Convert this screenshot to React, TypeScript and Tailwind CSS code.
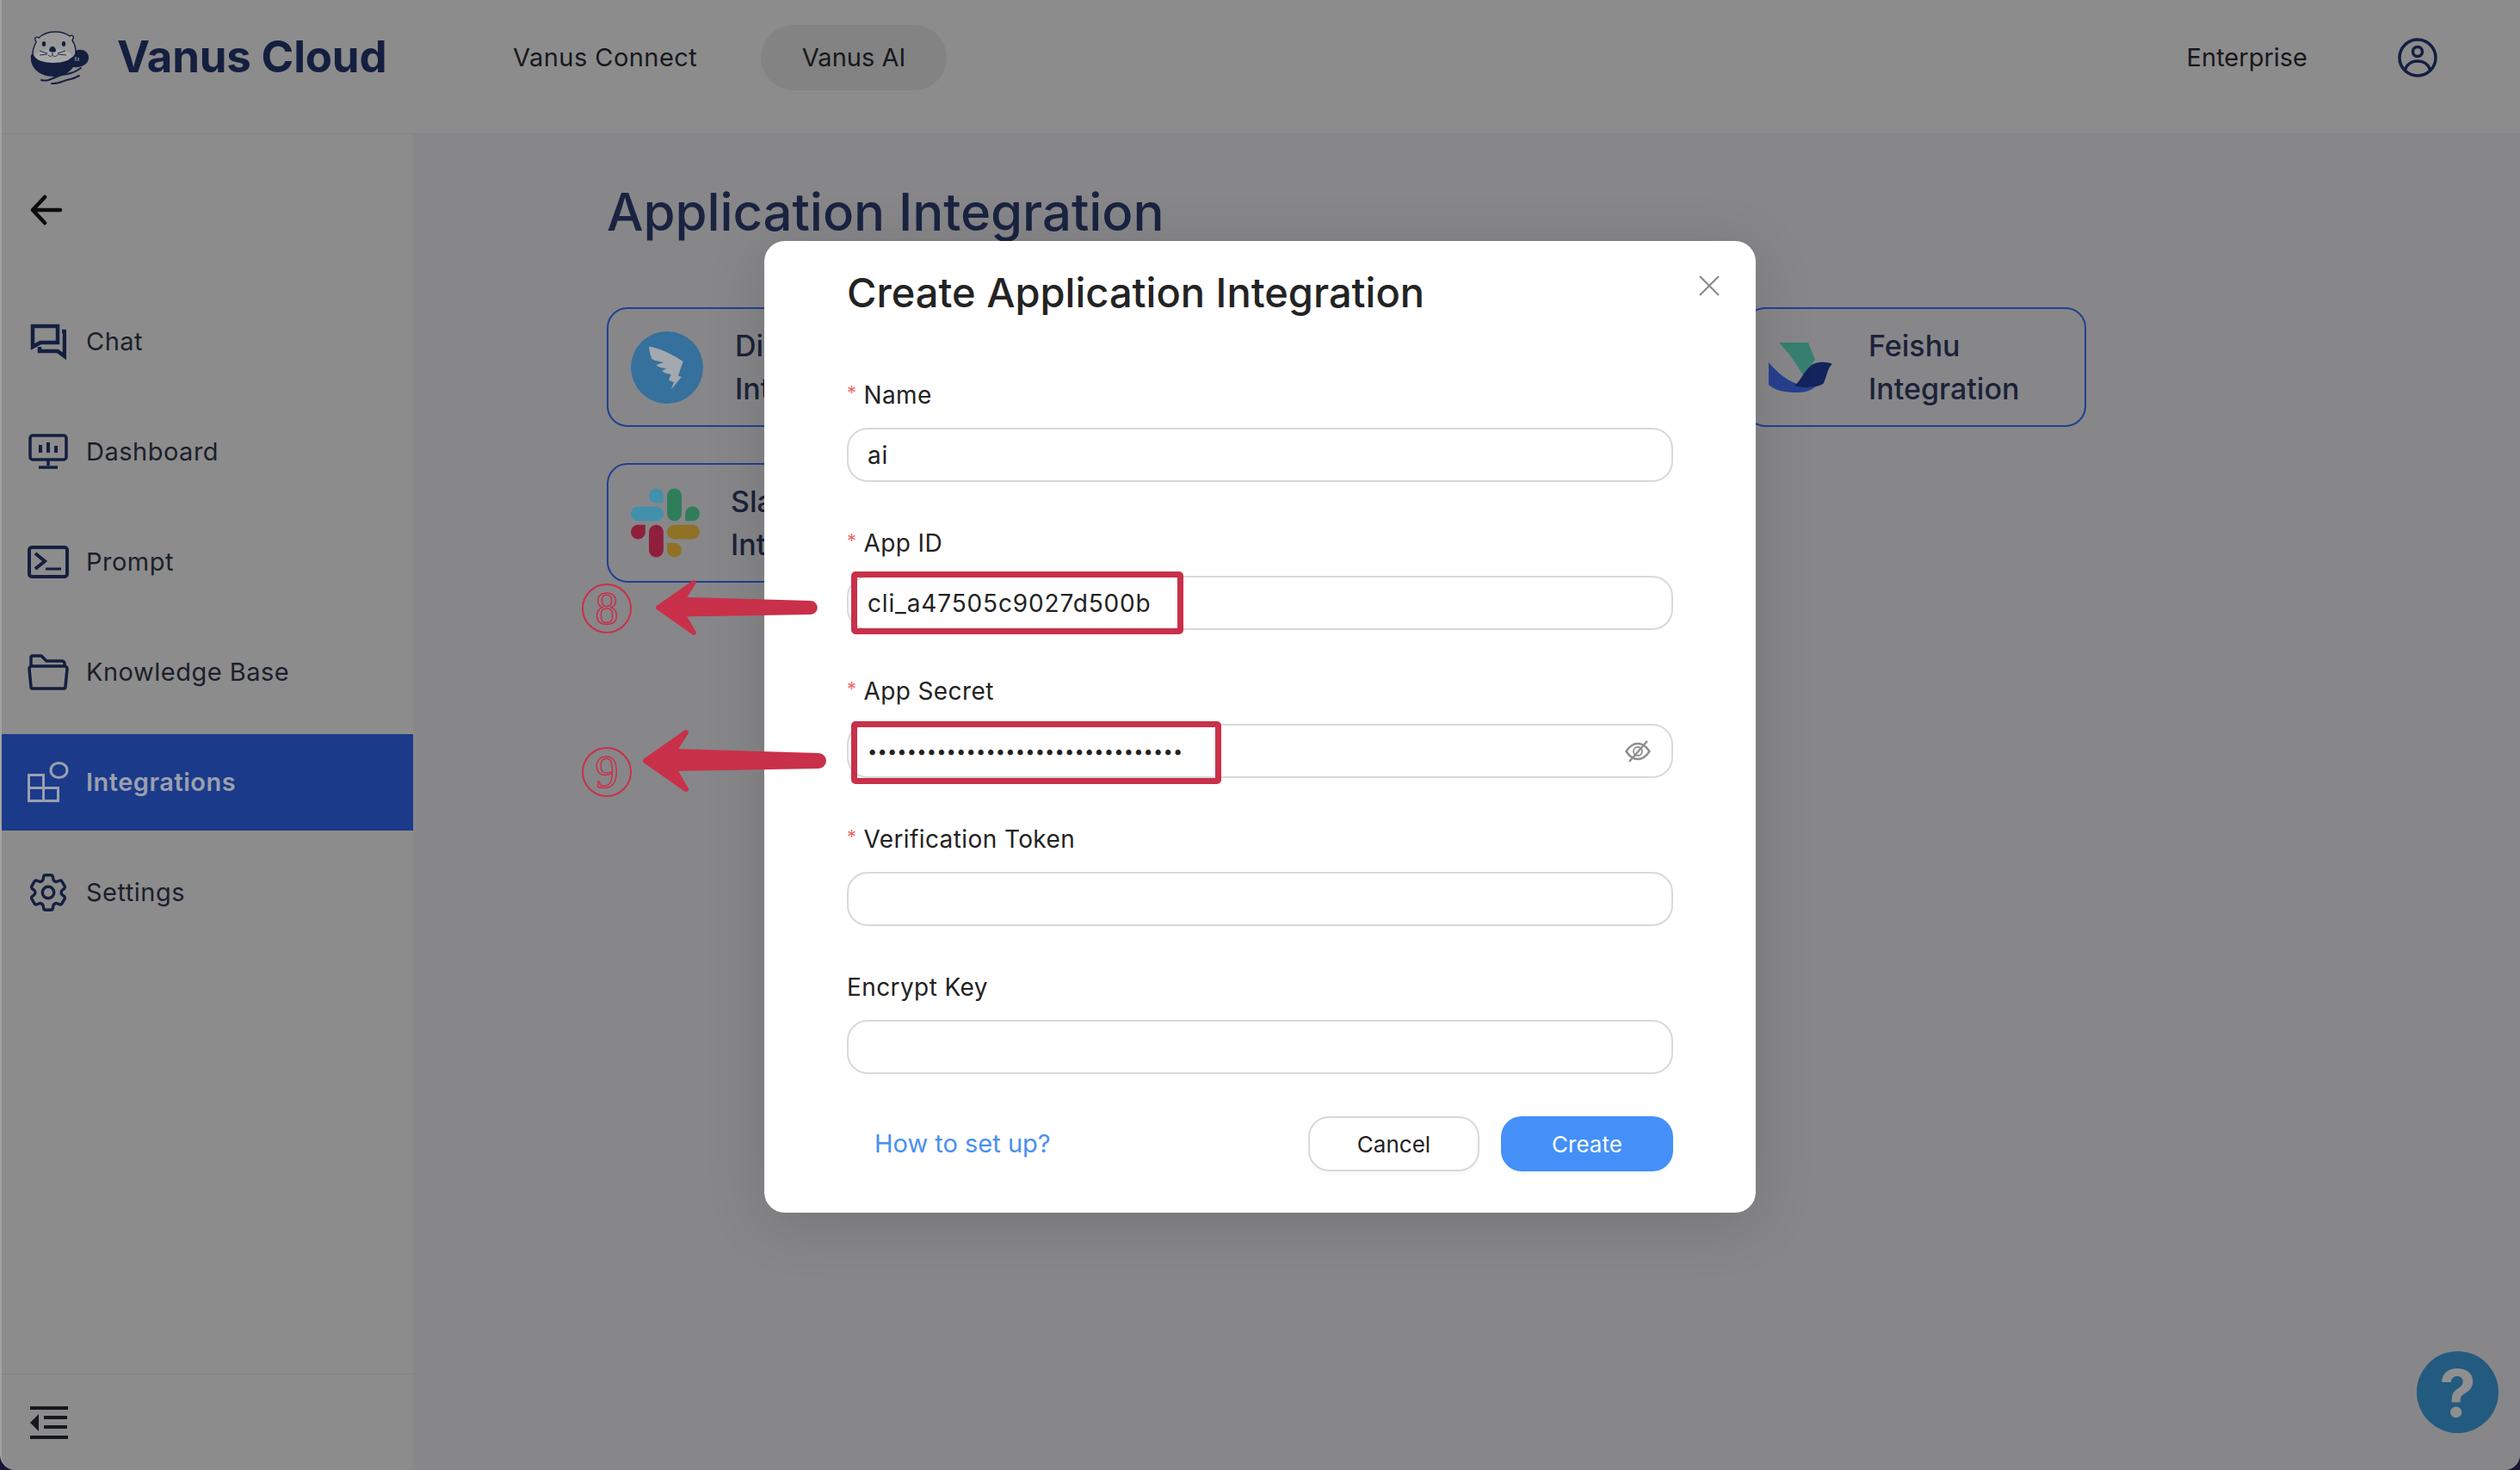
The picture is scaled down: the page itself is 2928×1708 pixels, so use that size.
import React from "react";
import { HiOutlineCog6Tooth } from "react-icons/hi2";

const navy = "#141f40";

const ChatIcon = () => (
  <svg width="42" height="42" viewBox="0 0 42 42" fill="none" stroke={navy} strokeWidth="4.5">
    <path d="M3 3h29v19H12l-9 5z" strokeLinejoin="miter" />
    <path d="M37 9h3v29l-8-6H11v-5" strokeLinejoin="miter" fill="none" />
  </svg>
);

const DashboardIcon = () => (
  <svg width="46" height="42" viewBox="0 0 46 42" fill="none" stroke={navy} strokeWidth="3.5">
    <rect x="2" y="2" width="42" height="28" rx="3" />
    <path d="M23 30v7M12 39h22" />
    <path d="M14 13v9M23 10v12M32 14v8" strokeWidth="4" />
  </svg>
);

const PromptIcon = () => (
  <svg width="48" height="38" viewBox="0 0 48 38" fill="none" stroke={navy} strokeWidth="4">
    <rect x="2" y="2" width="44" height="34" rx="3" />
    <path d="M9 9l11 9-11 9" />
    <path d="M21 27h18" strokeWidth="3" />
  </svg>
);

const FolderIcon = () => (
  <svg width="48" height="42" viewBox="0 0 48 42" fill="none" stroke={navy} strokeWidth="3.5" strokeLinejoin="round">
    <path d="M4 14V4a2 2 0 0 1 2-2h10l6 6h18a3 3 0 0 1 3 3v3" />
    <path d="M2 17a3 3 0 0 1 3-3h38a3 3 0 0 1 3 3l-2 21a2 2 0 0 1-2 2H6a2 2 0 0 1-2-2z" />
  </svg>
);

const IntegrationsIcon = () => (
  <svg width="48" height="48" viewBox="0 0 48 48" fill="none" stroke="#9aa0ae" strokeWidth="3">
    <rect x="1.5" y="15.5" width="17" height="15" />
    <rect x="1.5" y="30.5" width="17" height="15" />
    <rect x="18.5" y="30.5" width="17" height="15" />
    <ellipse cx="36.5" cy="10" rx="9.5" ry="8.5" />
  </svg>
);

const nav = [
  { label: "Chat", icon: <ChatIcon /> },
  { label: "Dashboard", icon: <DashboardIcon /> },
  { label: "Prompt", icon: <PromptIcon /> },
  { label: "Knowledge Base", icon: <FolderIcon /> },
  { label: "Integrations", icon: <IntegrationsIcon />, active: true },
  { label: "Settings", icon: <HiOutlineCog6Tooth size={54} color={navy} /> },
];

const OtterLogo = () => (
  <svg width="70" height="66" viewBox="14 12 70 66" fill="none" className="shrink-0">
    {/* body and flipper */}
    <path d="M16 42c-2 14 9 25 27 25 10 0 17-4 22-11 9 1 18-3 18-11 0-8-9-11-15-8-6-5-40-8-52 5z" fill={navy} />
    {/* head */}
    <path d="M22 27c-1-2-2-4-1-5 1-1 3-1 4 0 9-9 27-9 36-2 1-1 3-1 4 0 1 1 0 3-1 5 3 4 4 9 4 14 0 7-12 11-26 11S18 47 18 40c0-5 2-9 4-13z" fill="#999999" stroke={navy} strokeWidth="1.4" />
    <ellipse cx="42" cy="43" rx="21" ry="8" fill="#a8a8a8" />
    <ellipse cx="31" cy="29" rx="2.2" ry="3" fill={navy} />
    <ellipse cx="54" cy="29" rx="2.2" ry="3" fill={navy} />
    <path d="M37 37c0-3 2-5 4-5s4 2 4 5c0 2-6 2-8 0z" fill={navy} />
    <path d="M41 39v3M36 42c2 2 4 2 5 0 1 2 4 2 6 0M26 37l9 3M26 42l9-1M56 37l-9 3M57 42l-10-1" stroke={navy} strokeWidth="0.9" />
    <path d="M68 44v5M71 45v4" stroke="#999999" strokeWidth="1.2" />
    {/* waves */}
    <path d="M28 71c10 3 16-6 30-7 6-1 12-4 16-7M40 75c8 1 14-4 22-5 4-1 6-2 10-4" stroke={navy} strokeWidth="2" strokeLinecap="round" />
  </svg>
);

const DingTalkLogo = () => (
  <svg width="84" height="84" viewBox="0 0 84 84" className="shrink-0">
    <circle cx="42" cy="42" r="42" fill="#36709c" />
    <path d="M21.7 17.7C30 19 45 24 60.7 35L55 51.7l4 1-12.3 15 3.3-8.7-6-2.3 2.7-6.7c-4.700-1-8.700-2-10.700-4l5.300-3c-4 0-9-1-12-4l9-3c-6-1-11-2-14-4.300-2-4.700-3-9.700-3.300-14z" fill="#a3a9ae" />
  </svg>
);

const SlackLogo = () => (
  <svg width="80" height="81" viewBox="0 0 122.8 122.8" className="shrink-0">
    <path d="M25.8 77.6c0 7.1-5.8 12.9-12.9 12.9S0 84.7 0 77.6s5.8-12.9 12.9-12.9h12.9v12.9z" fill="#8f1f3d" />
    <path d="M32.3 77.6c0-7.1 5.8-12.9 12.9-12.9s12.9 5.8 12.9 12.9v32.3c0 7.1-5.8 12.9-12.9 12.9s-12.9-5.8-12.9-12.9V77.6z" fill="#8f1f3d" />
    <path d="M45.2 25.8c-7.1 0-12.9-5.8-12.9-12.9S38.1 0 45.2 0s12.9 5.8 12.9 12.9v12.9H45.2z" fill="#4390ad" />
    <path d="M45.2 32.3c7.1 0 12.9 5.8 12.9 12.9s-5.8 12.9-12.9 12.9H12.9C5.8 58.1 0 52.3 0 45.2s5.8-12.9 12.9-12.9h32.3z" fill="#4390ad" />
    <path d="M97 45.2c0-7.1 5.8-12.9 12.9-12.9s12.9 5.8 12.9 12.9-5.8 12.9-12.9 12.9H97V45.2z" fill="#2f7d5a" />
    <path d="M90.5 45.2c0 7.1-5.8 12.9-12.9 12.9s-12.9-5.8-12.9-12.9V12.9C64.7 5.8 70.5 0 77.6 0s12.9 5.8 12.9 12.9v32.3z" fill="#2f7d5a" />
    <path d="M77.6 97c7.1 0 12.9 5.8 12.9 12.9s-5.8 12.9-12.9 12.9-12.9-5.8-12.9-12.9V97h12.9z" fill="#8f7226" />
    <path d="M77.6 90.5c-7.1 0-12.9-5.8-12.9-12.9s5.8-12.9 12.9-12.9h32.3c7.1 0 12.9 5.8 12.9 12.9s-5.8 12.9-12.9 12.9H77.6z" fill="#8f7226" />
  </svg>
);

const FeishuLogo = () => (
  <svg width="74" height="58" viewBox="0 0 74 58" className="shrink-0">
    <path d="M12 0h34l8 20-14 18C32 24 22 10 12 0z" fill="#37806f" />
    <path d="M0 23c10 12 22 22 36 26 9 2 18 0 22-1-6 7-15 10-24 10-14 0-27-2-34-9z" fill="#27408f" />
    <path d="M30 50c7-5 11-17 20-24 7-4 17-4 24-1-5 3-6 13-10 22-2 2-6 4-12 4-9 2-16 1-22-1z" fill="#13235c" />
  </svg>
);

const cardClass = "flex h-[139px] w-[397px] items-center rounded-[24px] border-2 border-[#21408f] pl-[26px]";

const Card = ({ logo, title, textClass, className = "" }: { logo: React.ReactNode; title: string; textClass: string; className?: string }) => (
  <div className={`${cardClass} ${className}`}>
    {logo}
    <div className={`text-[34px] leading-[50px] font-medium whitespace-nowrap text-[#1b2238] ${textClass}`}>
      {title}
      <br />
      Integration
    </div>
  </div>
);

const fields = [
  { label: "Name", required: true, value: "ai" },
  { label: "App ID", required: true, value: "cli_a47505c9027d500b" },
  { label: "App Secret", required: true, secret: "••••••••••••••••••••••••••••••••" },
  { label: "Verification Token", required: true, value: "" },
  { label: "Encrypt Key", required: false, value: "" },
];

const EyeOff = () => (
  <svg width="30" height="26" viewBox="0 0 30 26" fill="none" stroke="#8e8e8e" strokeWidth="2.4" className="shrink-0">
    <path d="M1.5 13C6 6 10 4 15 4s9 2 13.5 9C24 20 20 22 15 22S6 20 1.5 13z" />
    <circle cx="15" cy="13" r="5" strokeWidth="1.8" />
    <path d="M5 25L26 1" />
  </svg>
);

const Arrow = ({ className }: { className: string }) => (
  <svg width="220" height="72" viewBox="0 0 220 72" className={`absolute ${className}`} fill="#c9304a" stroke="#c9304a" strokeWidth="6" strokeLinejoin="round" strokeLinecap="round">
    <path d="M3 36L50 3 36 25 204 30a6 6 0 0 1 0 12L36 45 50 69z" />
  </svg>
);

const CircledNumber = ({ n, className }: { n: string; className: string }) => (
  <div className={`absolute flex h-[58px] w-[58px] items-center justify-center rounded-full border-2 border-[#c9304a] ${className}`}>
    <span className="font-['Liberation_Serif',serif] text-[54px] leading-none text-transparent [-webkit-text-stroke:1.5px_#c9304a]">{n}</span>
  </div>
);

export default function App() {
  return (
    <div className="h-[1708px] w-[2928px] overflow-hidden bg-[#1a1530] font-['Inter',sans-serif]">
      <div className="relative flex h-full w-full flex-col overflow-hidden rounded-b-[18px] border-l-2 border-[#a3a3a3] bg-[#8c8c8c]">
        {/* top bar */}
        <header className="flex h-[156px] shrink-0 items-center border-b border-[#858585] bg-[#8c8c8c] pr-[96px] pb-[22px] pl-[32px]">
          <OtterLogo />
          <span className="ml-[32px] w-[314px] text-[51px] font-bold tracking-[-0.2px] whitespace-nowrap text-[#141f40]">Vanus Cloud</span>
          <span className="ml-[146px] w-[216px] text-[29px] tracking-[0.45px] whitespace-nowrap text-[#17181c]">Vanus Connect</span>
          <span className="ml-[72px] flex h-[76px] w-[216px] items-center justify-center rounded-full bg-[#838383] text-[29px] text-[#17181c]">Vanus AI</span>
          <span className="ml-auto text-[29px] text-[#17181c]">Enterprise</span>
          <svg width="46" height="46" viewBox="0 0 46 46" fill="none" stroke={navy} strokeWidth="3.5" className="ml-[105px]">
            <circle cx="23" cy="23" r="21" />
            <circle cx="23" cy="16" r="5.5" />
            <path d="M8 38c2-7 8-11 15-11s13 4 15 11" />
          </svg>
        </header>

        <div className="flex min-h-0 flex-1">
          {/* sidebar */}
          <aside className="flex w-[478px] shrink-0 flex-col bg-[#8c8c8c]">
            <div className="pt-[70px] pl-[33px]">
              <svg width="38" height="36" viewBox="0 0 38 36" fill="none" stroke="#0c0c0e" strokeWidth="4.5" strokeLinecap="round" strokeLinejoin="round">
                <path d="M17 3L3 18l14 15M3 18h32" />
              </svg>
            </div>
            <nav className="mt-[79px] flex flex-col gap-[16px]">
              {nav.map((item) => (
                <div
                  key={item.label}
                  className={`flex h-[112px] items-center ${item.active ? "bg-[#1b3a8a]" : ""}`}
                >
                  <div className="flex w-[98px] shrink-0 justify-center pl-[10px]">{item.icon}</div>
                  <span
                    className={`text-[29px] tracking-[0.5px] ${item.active ? "font-semibold text-[#9aa0ae]" : "text-[#1b1f2b]"}`}
                  >
                    {item.label}
                  </span>
                </div>
              ))}
            </nav>
            <div className="mt-auto flex h-[112px] items-center border-t border-[#838383] pl-[32px]">
              <svg width="46" height="40" viewBox="0 0 46 40" fill="#17181c">
                <rect x="1" y="1" width="44" height="4" />
                <rect x="17" y="12" width="27" height="4" />
                <rect x="17" y="23" width="27" height="4" />
                <rect x="1" y="35" width="44" height="4" />
                <path d="M11 10v20L1 20z" />
              </svg>
            </div>
          </aside>

          {/* page */}
          <main className="flex-1 bg-[#87878a] pl-[225px]">
            <h1 className="mt-[52px] text-[60px] leading-[76px] font-medium tracking-[-0.1px] text-[#1a2340]">Application Integration</h1>
            <div className="mt-[73px] grid w-[1719px] grid-cols-[397px_397px_397px] gap-x-[264px] gap-y-[42px]">
              <Card logo={<DingTalkLogo />} title="DingTalk" textClass="ml-[37px] w-[60px] overflow-hidden" />
              <Card logo={<FeishuLogo />} title="Feishu" textClass="ml-[42px]" className="col-start-3" />
              <Card logo={<SlackLogo />} title="Slack" textClass="ml-[36px] w-[60px] overflow-hidden" />
            </div>
          </main>
        </div>

        {/* modal */}
        <div className="absolute top-[280px] left-[886px] h-[1129px] w-[1152px] rounded-[24px] bg-white px-[96px] pt-[28px] shadow-[0_12px_70px_rgba(0,0,0,0.14)]">
          <div className="relative">
            <h2 className="text-[47px] leading-[64px] font-medium text-[#232323]">Create Application Integration</h2>
            <svg width="24" height="24" viewBox="0 0 24 24" fill="none" stroke="#8b8b8b" strokeWidth="2.2" className="absolute top-[12px] right-[-54px]">
              <path d="M1 1l22 22M23 1L1 23" />
            </svg>
          </div>
          <div className="mt-[65px] flex flex-col gap-[49px]">
            {fields.map((f) => (
              <div key={f.label}>
                <label className="flex h-[44px] items-center text-[28px] tracking-[0.4px] text-[#222222]">
                  {f.required && <span className="mt-[-6px] mr-[8px] text-[22px] text-[#ef6a6a]">*</span>}
                  {f.label}
                </label>
                <div className="mt-[16px] flex h-[63px] items-center rounded-[24px] border-2 border-[#d9d9d9] bg-white pr-[24px] pl-[22px] text-[28px] tracking-[0.85px] text-[#222222]">
                  {f.secret ? (
                    <>
                      <span className="text-[20px] tracking-[0.2px]">{f.secret}</span>
                      <span className="ml-auto pl-[4px]">
                        <EyeOff />
                      </span>
                    </>
                  ) : (
                    f.value
                  )}
                </div>
              </div>
            ))}
          </div>
          <div className="mt-[49px] flex items-center">
            <span className="ml-[32px] text-[29px] text-[#4a90f0]">How to set up?</span>
            <button className="ml-auto h-[64px] w-[199px] rounded-[24px] border-2 border-[#d9d9d9] bg-white text-[26px] text-[#222222] shadow-[0_4px_0_rgba(0,0,0,0.02)]">
              Cancel
            </button>
            <button className="ml-[25px] h-[64px] w-[200px] rounded-[24px] bg-[#4490f8] text-[26px] text-white shadow-[0_4px_0_rgba(0,0,0,0.02)]">
              Create
            </button>
          </div>
        </div>

        {/* annotations drawn over the shot */}
        <div className="absolute top-[664px] left-[987px] h-[73px] w-[386px] rounded-[5px] border-[7px] border-[#c9304a]" />
        <div className="absolute top-[838px] left-[987px] h-[73px] w-[430px] rounded-[5px] border-[7px] border-[#c9304a]" />
        <Arrow className="top-[670px] left-[760px] !w-[194px]" />
        <Arrow className="top-[848px] left-[745px]" />
        <CircledNumber n="8" className="top-[678px] left-[674px]" />
        <CircledNumber n="9" className="top-[868px] left-[674px]" />

        {/* help button */}
        <div className="absolute top-[1570px] left-[2806px] flex h-[95px] w-[95px] items-center justify-center rounded-full bg-[#235a80] text-[76px] leading-none font-bold text-[#8f8f8f]">
          ?
        </div>
      </div>
    </div>
  );
}
